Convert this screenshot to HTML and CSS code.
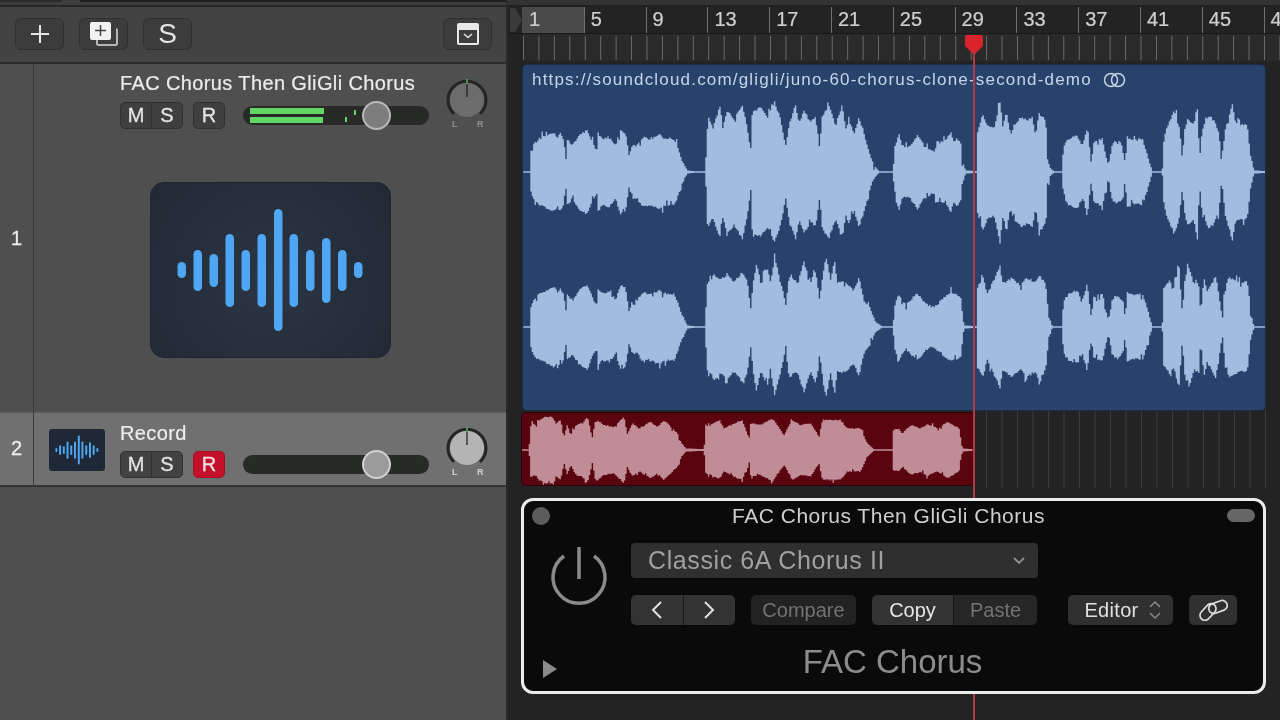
FILE: index.html
```html
<!DOCTYPE html>
<html lang="en">
<head>
<meta charset="utf-8">
<title>FAC Chorus Then GliGli Chorus</title>
<link rel="stylesheet" href="styles.css">
</head>
<body>
<svg class="defs" width="0" height="0" aria-hidden="true">
  <symbol id="wave-icon" viewBox="0 0 241 176">
    <g fill="#4fa6f2">
      <rect x="27.500" y="80" width="8.500" height="16" rx="4.250"/>
      <rect x="43.500" y="68" width="8.500" height="41" rx="4.250"/>
      <rect x="59.500" y="72" width="8.500" height="33" rx="4.250"/>
      <rect x="75.500" y="52" width="8.500" height="73" rx="4.250"/>
      <rect x="91.500" y="68" width="8.500" height="41" rx="4.250"/>
      <rect x="107.500" y="52" width="8.500" height="73" rx="4.250"/>
      <rect x="124" y="27" width="8.500" height="122" rx="4.250"/>
      <rect x="139.500" y="52" width="8.500" height="73" rx="4.250"/>
      <rect x="156" y="68" width="8.500" height="41" rx="4.250"/>
      <rect x="172" y="56" width="8.500" height="65" rx="4.250"/>
      <rect x="188" y="68" width="8.500" height="41" rx="4.250"/>
      <rect x="204" y="80" width="8.500" height="16" rx="4.250"/>
    </g>
  </symbol>
</svg>
<div class="app">
  <section class="left">
    <div class="top-strip"><span class="strip-a"></span><span class="strip-b"></span></div>
    <div class="toolbar">
      <button class="tool">
        <svg width="18" height="18" viewBox="0 0 18 18"><path d="M9 0v18M0 9h18" stroke="#e6e6e6" stroke-width="2" fill="none"/></svg>
      </button>
      <button class="tool">
        <svg width="30" height="26" viewBox="0 0 30 26"><path d="M8 8v15a1 1 0 0 0 1 1h18a1 1 0 0 0 1-1V9a1 1 0 0 0-1-1" fill="none" stroke="#dcdcdc" stroke-width="1.5"/><rect x="1" y="1" width="21" height="18" rx="2" fill="#f2f2f2"/><path d="M11.500 4v11M6 9.500h11" stroke="#444" stroke-width="1.500"/></svg>
      </button>
      <button class="tool tool-text">S</button>
      <button class="tool tool-end">
        <svg width="22" height="22" viewBox="0 0 22 22"><rect x="1" y="1" width="20" height="20" rx="1" fill="#3d3d3d" stroke="#e8e8e8" stroke-width="2"/><rect x="1" y="1" width="20" height="6" fill="#e8e8e8"/><path d="M7 11l4 3.500 4-3.500" fill="none" stroke="#e0e0e0" stroke-width="1.600"/></svg>
      </button>
    </div>
    <div class="track track-one">
      <div class="track-num">1</div>
      <div class="track-body">
        <div class="head">
          <div class="head-main">
            <div class="track-name">FAC Chorus Then GliGli Chorus</div>
            <div class="controls">
              <div class="ms"><span class="m">M</span><span class="s">S</span></div>
              <span class="rec">R</span>
              <div class="fader">
                <div class="meter">
                  <span class="meter-l"></span><span class="meter-r"></span>
                  <i class="peak peak-a"></i><i class="peak peak-b"></i>
                </div>
                <span class="fader-knob"></span>
              </div>
            </div>
          </div>
          <svg class="pan pan-one" width="44" height="56" viewBox="0 0 44 56">
            <path d="M9 36A19 19 0 1 1 35 36" fill="none" stroke="#252525" stroke-width="3"/>
            <circle cx="22" cy="22" r="17" fill="#6c6c6c"/>
            <path d="M22 2v17" stroke="#2e2e2e" stroke-width="1.500"/>
            <path d="M22 1v5" stroke="#55b060" stroke-width="1.500"/>
            <text class="pan-label" x="7" y="49">L</text>
            <text class="pan-label" x="32" y="49">R</text>
          </svg>
        </div>
        <div class="art"><svg width="239" height="174" viewBox="1 1 239 174"><use href="#wave-icon" width="241" height="176"/></svg></div>
      </div>
    </div>
    <div class="track track-two">
      <div class="track-num">2</div>
      <div class="track-body two-row">
        <div class="thumb"><svg width="56" height="42" viewBox="0 0 241 176" preserveAspectRatio="none"><use href="#wave-icon" width="241" height="176"/></svg></div>
        <div class="head-main two-main">
          <div class="track-name">Record</div>
          <div class="controls">
            <div class="ms ms-light"><span class="m">M</span><span class="s">S</span></div>
            <span class="rec rec-on">R</span>
            <div class="fader"><span class="fader-knob knob-light"></span></div>
          </div>
        </div>
        <svg class="pan pan-two" width="44" height="56" viewBox="0 0 44 56">
          <path d="M9 36A19 19 0 1 1 35 36" fill="none" stroke="#252525" stroke-width="3"/>
          <circle cx="22" cy="22" r="17" fill="#b4b4b4"/>
          <path d="M22 2v17" stroke="#3a3a3a" stroke-width="1.500"/>
          <path d="M22 1v5" stroke="#55b060" stroke-width="1.500"/>
          <text class="pan-label" x="7" y="49">L</text>
          <text class="pan-label" x="32" y="49">R</text>
        </svg>
      </div>
    </div>
    <div class="left-rest"></div>
  </section>
  <section class="right">
    <div class="top-strip right-strip"></div>
    <div class="ruler">
      <div class="bars">
        <span class="ruler-notch"></span>
        <span class="bar bar-first">1</span><span class="bar">5</span><span class="bar">9</span><span class="bar">13</span><span class="bar">17</span><span class="bar">21</span><span class="bar">25</span><span class="bar">29</span><span class="bar">33</span><span class="bar">37</span><span class="bar">41</span><span class="bar">45</span><span class="bar">4</span>
      </div>
      <div class="beats"></div>
    </div>
    <div class="arrange">
      <div class="region region-blue">
        <div class="region-title">https://soundcloud.com/gligli/juno-60-chorus-clone-second-demo
          <svg width="24" height="16" viewBox="0 0 24 16"><circle cx="8" cy="8" r="6.500" fill="none" stroke="#c4d2e6" stroke-width="1.500"/><circle cx="15" cy="8" r="6.500" fill="none" stroke="#c4d2e6" stroke-width="1.500"/></svg>
        </div>
        <svg class="wave" viewBox="523 65 742 345" preserveAspectRatio="none"><path id="wave-l" fill="#a0bcde"/><path id="wave-r" fill="#a0bcde"/></svg>
      </div>
      <div class="lane">
        <div class="region region-red">
          <svg class="wave" viewBox="522 413 451 72" preserveAspectRatio="none"><path id="wave-rec" fill="#c08d96"/></svg>
        </div>
        <div class="lane-grid"></div>
      </div>
      <div class="plugin">
        <div class="plugin-title">
          <span class="plugin-dot"></span>
          <span class="plugin-name">FAC Chorus Then GliGli Chorus</span>
          <span class="plugin-pill"></span>
        </div>
        <div class="plugin-main">
          <svg class="power" width="62" height="64" viewBox="0 0 62 64"><path d="M16 13A26 26 0 1 0 46 13M31 4v32" fill="none" stroke="#8a8a8a" stroke-width="3.500"/></svg>
          <div class="plugin-controls">
            <div class="preset"><span>Classic 6A Chorus II</span>
              <svg width="14" height="10" viewBox="0 0 14 10"><path d="M2 2l5 5 5-5" fill="none" stroke="#8f8f8f" stroke-width="1.800"/></svg>
            </div>
            <div class="plugin-row">
              <div class="nav">
                <span><svg width="14" height="20" viewBox="0 0 14 20"><path d="M11 2L3 10l8 8" fill="none" stroke="#e0e0e0" stroke-width="2"/></svg></span>
                <span><svg width="14" height="20" viewBox="0 0 14 20"><path d="M3 2l8 8-8 8" fill="none" stroke="#e0e0e0" stroke-width="2"/></svg></span>
              </div>
              <span class="pbtn compare">Compare</span>
              <div class="copy-paste"><span class="copy">Copy</span><span class="paste">Paste</span></div>
              <span class="pbtn editor">Editor
                <svg width="14" height="22" viewBox="0 0 14 22"><path d="M2 8l5-5 5 5M2 14l5 5 5-5" fill="none" stroke="#8a8a8a" stroke-width="1.500"/></svg>
              </span>
              <span class="pbtn link">
                <svg width="30" height="22" viewBox="0 0 30 22"><g fill="none" stroke="#dcdcdc" stroke-width="1.700"><rect x="0.500" y="8" width="19" height="10" rx="5" transform="rotate(-48 10 13)"/><rect x="10.500" y="3" width="19" height="10" rx="5" transform="rotate(-20 20 8)"/></g></svg>
              </span>
            </div>
          </div>
        </div>
        <div class="plugin-foot">
          <svg class="disclose" width="14" height="18" viewBox="0 0 14 18"><path d="M0 0l14 9L0 18z" fill="#8a8a8a"/></svg>
          <span class="plugin-label">FAC Chorus</span>
        </div>
      </div>
    </div>
    <div class="playhead">
      <svg width="20" height="20" viewBox="0 0 20 20"><path d="M1 2q0-2 2-2h14q2 0 2 2v9l-9 9-9-9z" fill="#d9232c"/></svg>
      <span class="playhead-line"></span>
    </div>
  </section>
</div>
<script src="waveform.js"></script>
</body>
</html>
```

FILE: styles.css
```css
* { box-sizing: border-box; }
html, body { margin: 0; height: 720px; overflow: hidden; background: #232323; }
body { font-family: "Liberation Sans", Arial, sans-serif; color: #ddd; }
.defs { position: absolute; }
.app { display: grid; grid-template-columns: 508px 772px; height: 720px; filter: blur(0.45px); }
svg { display: block; }

/* left column */
.left { display: flex; flex-direction: column; background: #4f4f4f; border-right: 2px solid #2a2a2a; }
.top-strip { height: 7px; background: #3d3d3d; border-bottom: 2px solid #262626; display: flex; gap: 18px; flex: none; }
.strip-a { width: 62px; height: 2px; background: #2a2a2a; }
.strip-b { flex: 1; height: 2px; background: #1e1e1e; }
.toolbar { height: 57px; flex: none; display: flex; align-items: center; gap: 15px; padding: 0 14px 2px 15px; background: #434343; border-bottom: 2px solid #2b2b2b; }
.tool { width: 49px; height: 32px; padding: 0; display: flex; align-items: center; justify-content: center; background: #3c3c3c; border: 1px solid #303030; border-radius: 6px; color: #e4e4e4; font: 28px "Liberation Sans", Arial, sans-serif; }
.tool-end { margin-left: auto; }
.track { display: flex; flex: none; }
.track-num { width: 34px; flex: none; display: flex; align-items: center; justify-content: center; font-size: 20px; color: #ececec; border-right: 1px solid #3a3a3a; -webkit-text-stroke: 0.3px #ececec; }
.track-one { height: 348px; }
.track-body { flex: 1; min-width: 0; }
.head { display: flex; margin-left: 86px; }
.head-main { width: 309px; flex: none; padding-top: 7px; }
.track-name { font-size: 20px; line-height: 24px; height: 24px; color: #ececec; white-space: nowrap; letter-spacing: 0.38px; -webkit-text-stroke: 0.2px #ececec; }
.controls { display: flex; align-items: center; margin-top: 7px; }
.ms { width: 63px; height: 27px; display: flex; background: #3f3f3f; border: 1px solid #303030; border-radius: 5px; font-size: 20px; line-height: 25px; color: #e4e4e4; text-align: center; -webkit-text-stroke: 0.3px #e4e4e4; }
.ms .m { width: 31px; border-right: 1px solid #303030; }
.ms .s { flex: 1; }
.ms-light { background: #424242; }
.rec { width: 32px; height: 27px; margin-left: 10px; background: #3f3f3f; border: 1px solid #303030; border-radius: 5px; font-size: 20px; line-height: 25px; text-align: center; color: #e4e4e4; -webkit-text-stroke: 0.3px currentColor; }
.rec-on { background: #c4112b; border-color: #a4101f; color: #f4dfe0; }
.fader { position: relative; width: 186px; height: 19px; margin-left: 18px; background: #282a28; border-radius: 10px; }
.fader-knob { position: absolute; left: 119px; top: -5px; width: 29px; height: 29px; border-radius: 50%; background: #7d7d7d; border: 2px solid #b8b8b8; }
.knob-light { background: #9a9b9a; border-color: #d0d0d0; }
.meter { position: absolute; left: 7px; top: 2px; width: 110px; height: 15px; display: flex; flex-direction: column; gap: 3px; }
.meter-l, .meter-r { width: 74px; height: 6px; background: #62d662; }
.meter-r { width: 73px; }
.peak { position: absolute; width: 2px; height: 5px; background: #62d662; }
.peak-a { left: 95px; top: 9px; }
.peak-b { left: 104px; top: 2px; }
.pan { flex: none; overflow: visible; }
.pan-one { margin: 14px 0 0 16px; }
.pan-label { font-size: 9px; font-weight: 700; fill: #8f8f8f; }
.art { width: 241px; height: 176px; margin: 48px 0 0 116px; background: radial-gradient(circle at 50% 55%, #2c3544, #212935); border: 1px solid #1e2530; border-radius: 14px; }
.track-two { height: 75px; background: #707070; border-bottom: 2px solid #333; box-shadow: inset 0 1px 0 #5b5b5b; }
.two-row { display: flex; }
.thumb { width: 56px; height: 42px; margin: 17px 0 0 15px; background: #1f2836; border-radius: 3px; flex: none; }
.two-main { margin-left: 15px; padding-top: 9px; }
.two-main .controls { margin-top: 6px; }
.pan-two { margin: 14px 0 0 16px; }
.pan-two .pan-label { fill: #cfcfcf; }
.left-rest { flex: 1; background: #4f4f4f; }

/* ruler */
.right { position: relative; display: flex; flex-direction: column; background: #232323; }
.right-strip { background: #333; border-bottom-color: #202020; }
.ruler { height: 56px; flex: none; background: #232323; }
.bars { height: 27px; display: flex; padding-left: 14px; position: relative; overflow: hidden; border-bottom: 1px solid #181818; }
.ruler-notch { position: absolute; left: 2px; top: 1px; width: 12px; height: 24px; background: #3a3a3a; clip-path: polygon(0 0, 45% 0, 100% 50%, 45% 100%, 0 100%); }
.bar { width: 61.8px; flex: none; padding-left: 6px; border-left: 1px solid #6e6e6e; font-size: 20px; line-height: 25px; color: #cfcfcf; -webkit-text-stroke: 0.2px #cfcfcf; }
.bar-first { background: #4a4a4a; border-left-color: #4a4a4a; }
.beats { height: 27px; margin-left: 15px; background-color: #2a2a2a; background-image: linear-gradient(90deg, #6c6c6c 0 1px, transparent 1px); background-size: 15.45px 24px; background-repeat: repeat-x; background-position: 0 2px; }

/* arrange area */
.arrange { display: flex; flex-direction: column; flex: 1; padding-top: 2px; }
.region { position: relative; overflow: hidden; }
.region-blue { width: 742px; height: 345px; margin-left: 15px; background: #27436c; border-radius: 4px; box-shadow: 0 0 0 1px #1a2b44; flex: none; }
.region-title { position: relative; z-index: 1; display: flex; align-items: center; gap: 11px; padding: 2px 0 0 9px; height: 28px; font-size: 17px; letter-spacing: 1.18px; color: #c6d4e8; white-space: nowrap; }
.wave { position: absolute; left: 0; top: 0; width: 100%; height: 100%; }
.lane { display: flex; height: 78px; flex: none; }
.region-red { width: 451px; height: 72px; margin: 3px 0 0 14px; background: #5a0410; border-radius: 4px; box-shadow: 0 0 0 1px #2a0208; }
.lane-grid { flex: 1; height: 78px; background-image: linear-gradient(90deg, #3d3d3d 0 1px, transparent 1px); background-size: 15.5px 100%; background-position: 13px 0; }
.plugin { position: relative; z-index: 3; width: 745px; height: 196px; margin: 10px 0 0 13px; background: #0a0a0a; border: 3px solid #ececec; border-radius: 12px; }
.plugin-title { display: flex; align-items: center; justify-content: space-between; padding: 0 8px 0 8px; height: 29px; }
.plugin-dot { width: 18px; height: 18px; border-radius: 50%; background: #5c5c5c; }
.plugin-name { font-size: 21px; color: #cfcfcf; letter-spacing: 0.5px; }
.plugin-pill { width: 28px; height: 13px; border-radius: 7px; background: #666; }
.plugin-main { display: flex; }
.power { margin: 13px 0 0 24px; flex: none; }
.plugin-controls { margin: 13px 0 0 21px; flex: 1; }
.preset { width: 407px; height: 35px; padding: 0 12px 0 17px; display: flex; align-items: center; justify-content: space-between; background: #2f2f2f; border-radius: 4px; color: #a0a0a0; font-size: 25px; letter-spacing: 0.6px; }
.plugin-row { display: flex; margin-top: 17px; height: 30px; }
.nav { width: 104px; display: flex; background: #333; border-radius: 5px; }
.nav span { flex: 1; display: flex; align-items: center; justify-content: center; }
.nav span + span { border-left: 1px solid #1a1a1a; }
.pbtn { display: flex; align-items: center; justify-content: center; border-radius: 5px; background: #303030; font-size: 20px; color: #e0e0e0; }
.compare { width: 105px; margin-left: 16px; background: #222; color: #737373; }
.copy-paste { width: 165px; margin-left: 16px; display: flex; font-size: 20px; line-height: 30px; text-align: center; border-radius: 5px; overflow: hidden; }
.copy { width: 81px; background: #333; color: #e6e6e6; }
.paste { flex: 1; background: #262626; color: #737373; border-left: 1px solid #151515; }
.editor { width: 105px; margin-left: 31px; gap: 9px; padding-left: 5px; letter-spacing: 0.3px; }
.link { width: 48px; margin-left: 16px; }
.plugin-foot { position: relative; text-align: center; margin-top: 17px; padding-right: 2px; }
.plugin-label { font-size: 33px; line-height: 40px; color: #8c8c8c; }
.disclose { position: absolute; left: 19px; top: 18px; }

/* playhead */
.playhead { position: absolute; z-index: 2; left: 456px; top: 35px; bottom: 0; width: 20px; display: flex; flex-direction: column; align-items: center; }
.playhead-line { width: 2px; flex: 1; margin-top: -4px; background: #b23a48; }
```

FILE: waveform.js
```js
// Waveform outlines, read off the recording as "x,y" pairs in a zoomed view.
var S3 = '25,170 30,145 40,115 50,150 70,155 95,118 115,150 145,170 150,140 175,140 195,110 205,135 215,130 225,140 228,190 240,225 272,230';
var S5 = '533,150 550,130 575,120 590,150 605,98 612,160 618,215 622,140 650,128 668,210 680,145 695,135 712,150 718,205 725,125 745,135 770,130 785,175 800,230 830,230';
var S1 = '10,230 29,230 30,170 40,145 55,130 75,122 100,110 110,125 120,112 130,135 135,190 140,130 155,150 175,118 200,103 215,140 228,165 232,112 245,130 265,125 285,148 300,103 315,112 325,180 335,150 350,150 365,125 385,130 400,125 418,118 430,128 460,130 470,150 480,185 490,205 500,225 520,230 555,230';

var LEFT = {
  a: S1 + ' 557,140 562,60 575,95 598,35 605,100 620,45 640,70 650,55 665,30 680,95 690,170 695,50 720,35 740,65 762,20 780,70 795,150 805,90 825,25 835,85 850,45 870,80 885,65 897,155 905,60 925,30 945,90 965,25 975,100 985,75 1000,115 1015,65 1030,110 1045,170 1060,210 1075,228 1085,230 1118,230',
  b: S3 + ' 275,110 292,55 305,90 325,100 343,18 352,95 362,50 375,120 385,90 400,70 410,65 425,75 440,65 450,120 460,55 475,65 482,95 485,190 495,220 505,230 530,230 ' + S5 + ' 832,150 842,100 865,45 873,60 880,90 890,180 897,105 905,70 925,85 935,25 942,190 950,100 970,60 985,75 1000,110 1008,205 1018,105 1040,25 1050,85 1085,90 1095,180 1105,225 1140,230'
};
var RIGHT = {
  a: S1 + ' 557,105 570,90 580,70 600,90 620,70 640,95 665,65 680,90 690,175 697,100 708,35 720,95 740,55 750,95 762,25 780,90 795,165 805,80 830,95 850,35 870,95 885,60 897,150 908,60 917,20 930,90 942,30 950,95 975,95 1000,120 1015,80 1030,150 1050,175 1065,215 1085,230 1118,230',
  b: '25,170 40,130 60,165 95,128 120,160 145,170 195,125 225,140 235,225 272,230 275,110 292,80 305,130 343,48 352,100 380,80 405,105 420,80 450,95 460,72 480,100 490,200 500,230 530,230 ' + S5 + ' 832,120 850,90 865,110 880,45 890,190 897,90 908,45 925,100 940,95 945,190 955,80 965,125 990,78 1000,130 1010,210 1018,110 1030,80 1060,95 1085,95 1095,190 1105,230 1140,230'
};
var REC = '35,150 55,150 60,70 75,75 85,60 105,50 125,50 135,70 150,60 160,110 170,75 180,105 195,75 215,70 230,50 245,110 255,55 280,75 310,80 340,50 350,100 365,70 385,85 420,65 440,80 460,60 490,90 500,100 510,125 525,145 580,150 585,80 600,75 625,62 640,85 670,70 695,60 715,115 720,70 750,75 785,55 820,105 845,60 870,75 900,70 925,110 935,60 970,60 990,60 1010,85 1050,85 1070,130 1090,148 1145,150 1148,90 1165,85 1175,100 1200,75 1230,85 1250,72 1280,85 1310,65 1345,85 1355,145 1385,150';

function parse(text, originX, centerY) {
  return text.split(' ').map(function (pair) {
    var p = pair.split(',');
    return [originX + p[0] / 3, Math.max(0.8, (centerY - p[1]) / 3)];
  });
}

function outline(points, centerY, seed, roughness) {
  var random = seed;
  function next() {
    random = (random * 16807) % 2147483647;
    return random / 2147483647;
  }
  function jitter(amp) {
    if (amp < 6) return 0;
    var r = next(), size;
    if (r > 0.96) size = 3 + next() * 3;         // short peak
    else if (r < 0.04) size = -(3 + next() * 3); // short dip
    else size = next() * 2.4 - 1.4;
    return size * roughness;
  }
  var step = 1.4, columns = [], i = 0;
  var last = points[points.length - 1][0];
  for (var x = points[0][0]; x <= last; x += step) {
    while (i < points.length - 2 && points[i + 1][0] <= x) i++;
    var a = points[i], b = points[i + 1];
    var t = Math.min(1, (x - a[0]) / Math.max(0.01, b[0] - a[0]));
    var amp = a[1] + (b[1] - a[1]) * t;
    columns.push({ x: x, up: amp + jitter(amp), down: amp + jitter(amp) });
  }
  var d = 'M' + columns[0].x.toFixed(1) + ' ' + centerY;
  columns.forEach(function (c) {
    d += 'V' + (centerY - c.up).toFixed(1) + 'H' + (c.x + step).toFixed(1);
  });
  columns.slice().reverse().forEach(function (c) {
    d += 'V' + (centerY + c.down).toFixed(1) + 'H' + c.x.toFixed(1);
  });
  return d + 'Z';
}

function channel(id, sets, centerY, seed) {
  var pts = parse(sets.a, 520, 230).concat(parse(sets.b, 885, 230));
  document.getElementById(id).setAttribute('d', outline(pts, centerY, seed, 1));
}

channel('wave-l', LEFT, 172, 12345);
channel('wave-r', RIGHT, 327, 67891);
document.getElementById('wave-rec').setAttribute('d', outline(parse(REC, 510, 150), 450, 4242, 0.5));
```
